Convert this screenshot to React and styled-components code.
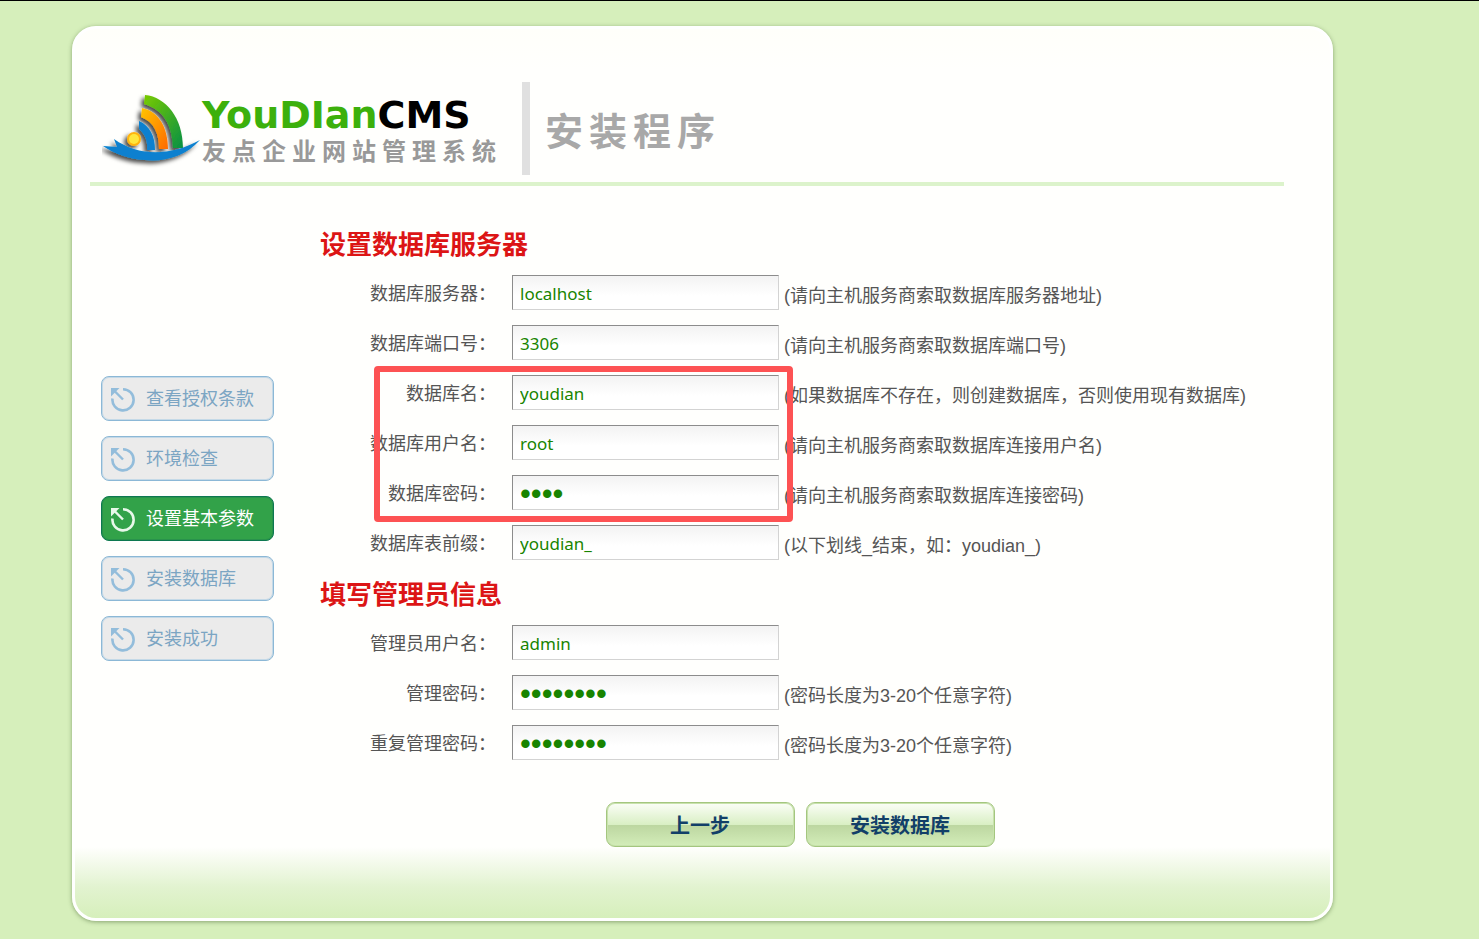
import { useId } from "react";
import styled, { createGlobalStyle, css } from "styled-components";

const GlobalStyle = createGlobalStyle`
    * {
        box-sizing: border-box;
    }
    body {
        margin: 0;
        background: #d6efbb;
        border-top: 1px solid #000;
        color: #555;
        font: 18px/38px "Liberation Sans", "Noto Sans CJK SC", sans-serif;
    }
`;
const Card = styled.div`
    margin: 25px 146px 18px 72px;
    border: 3px solid #fff;
    border-radius: 24px;
    background: linear-gradient(#fffffa, #fffffd 40px, #fffffd);
    box-shadow: 0 1px 4px rgba(60, 90, 40, 0.5);
    overflow: hidden;
`;
const Header = styled.header`
    display: flex;
    align-items: center;
    margin: 0 46px 0 15px;
    padding: 53px 0 7px 12px;
    border-bottom: 4px solid #dcf3cb;
`;
const Brand = styled.div`
    width: 298px;
    height: 74px;
    white-space: nowrap;
`;
const BrandName = styled.div`
    color: #3cb00c;
    font: bold 38px/46px "DejaVu Sans", sans-serif;
    span {
        color: #000;
    }
`;
const BrandSub = styled.div`
    color: #999;
    font: bold 24px/28px "Liberation Sans", "Noto Sans CJK SC", sans-serif;
    letter-spacing: 6px;
`;
const Product = styled.h1`
    margin: 0 0 0 22px;
    padding-left: 15px;
    border-left: 8px solid #e0e0e0;
    color: #a8a8a8;
    font: bold 38px/93px "Noto Sans CJK SC", sans-serif;
    letter-spacing: 6px;
`;
const Main = styled.main`
    display: flex;
    padding: 39px 50px 0 26px;
`;
const Steps = styled.ol`
    display: flex;
    flex: none;
    flex-direction: column;
    gap: 15px;
    width: 219px;
    margin: 0;
    padding: 151px 46px 0 0;
    list-style: none;
`;
const Step = styled.li`
    display: flex;
    align-items: center;
    gap: 9px;
    height: 45px;
    padding: 0 0 0 8px;
    border: 1px solid #8cb8d6;
    border-radius: 8px;
    background: #ebebeb;
    color: #7ba5c3;
    box-shadow: inset 0 0 0 1px #c4d9e7;
    svg {
        color: #93bddb;
    }
    ${({ $active }) => $active && css`
        border-color: #0c7850;
        background: #32a249;
        color: #fff;
        box-shadow: inset 0 0 0 1px #29924c;
        svg {
            color: #e8f8ea;
        }
    `}
`;
const Form = styled.form`
    flex: 1;
    min-width: 0;
`;
const Rows = styled.div`
    display: flex;
    flex-direction: column;
    gap: 15px;
`;
const Marked = styled(Rows)`
    position: relative;
`;
const Marker = styled.div`
    position: absolute;
    top: -9px;
    left: 54px;
    width: 419px;
    height: 156px;
    border: 6px solid #fd5253;
    border-radius: 4px;
    pointer-events: none;
`;
const Title = styled.h2`
    height: 35px;
    margin: 0;
    color: #dc1515;
    font-size: 26px;
    line-height: 40px;
`;
const Row = styled.div`
    display: flex;
    height: 35px;
    white-space: nowrap;
`;
const Label = styled.label`
    flex: none;
    width: 176px;
    margin-right: 16px;
    text-align: right;
`;
const Input = styled.input`
    flex: none;
    width: 267px;
    height: 35px;
    padding: 2px 7px 0;
    border: 1px solid #d3d3d3;
    border-top-color: #8c8c8c;
    border-left-color: #8c8c8c;
    border-radius: 0;
    outline: 0;
    background: linear-gradient(#f3f3f3, #fff 20px);
    color: #188400;
    font: 17px "Noto Sans", sans-serif;
    &[type="password"] {
        font: 31px/31px "Liberation Sans", sans-serif;
    }
`;
const Hint = styled.span`
    margin-left: 5px;
    line-height: 42px;
`;
const Actions = styled.div`
    display: flex;
    justify-content: center;
    gap: 11px;
    padding-top: 42px;
`;
const Button = styled.button`
    width: 189px;
    height: 45px;
    padding: 0;
    border: 1px solid #a4c67f;
    border-radius: 9px;
    background: linear-gradient(#fbfef7, #d9efc4 50%, #bcd6a0 51%, #d3edb9);
    box-shadow: inset 0 0 0 1px #c8e2ac;
    color: #123f68;
    font: bold 20px "Noto Sans CJK SC", sans-serif;
`;
const Footer = styled.footer`
    height: 71px;
    background: linear-gradient(#fffffd, #e2f3d0 40px, #d6efbb);
`;

const Logo = () => (
    <svg width="100" height="84" viewBox="0 0 100 84" aria-hidden="true">
        <defs>
            <linearGradient id="leaf" x1="0" y1="0" x2="1" y2="1">
                <stop offset="0" stopColor="#79cb00" />
                <stop offset="1" stopColor="#079044" />
            </linearGradient>
            <linearGradient id="sun" x1="0" y1="0" x2="1" y2="1">
                <stop offset="0" stopColor="#ffc400" />
                <stop offset="1" stopColor="#ff6a00" />
            </linearGradient>
            <filter id="soft" x="-20%" y="-20%" width="140%" height="140%">
                <feDropShadow dx="-3" dy="3" stdDeviation="2" floodColor="#000" floodOpacity="0.7" />
            </filter>
        </defs>
        <g filter="url(#soft)">
            <path d="M43 8c21 2 38 23 38 53H71C70 38 62 23 42 17z" fill="url(#leaf)" />
            <path d="M40 21c18 4 26 21 26 41H57C57 46 52 35 39 30z" fill="url(#sun)" />
            <path d="M37 34c11 5 16 15 16 29H45C46 54 43 47 37 42z" fill="#0880cf" />
            <circle cx="32" cy="52" r="7" fill="#ffb30f" />
            <path d="M1 59l14 1-3-8c25 18 57 17 86 1-15 17-37 22-55 20-17-1-32-7-42-14z" fill="#0880cf" />
        </g>
        <circle cx="32" cy="52" r="5" fill="#ffe63c" />
    </svg>
);

const StepIcon = () => (
    <svg width="27" height="27" viewBox="0 0 27 27" fill="none" aria-hidden="true">
        <path d="M13 4.2A10.6 10.6 0 1 1 2.5 13.5" stroke="currentColor" strokeWidth="2.6" />
        <path d="M4 5.5l9 9" stroke="currentColor" strokeWidth="2.4" />
        <path d="M1 3h8.5L1 11.5z" fill="currentColor" />
    </svg>
);

const Field = ({ label, value, hint, type = "text" }) => {
    const id = useId();
    return (
        <Row>
            <Label htmlFor={id}>{label}：</Label>
            <Input id={id} type={type} defaultValue={value} />
            {hint && <Hint>{hint}</Hint>}
        </Row>
    );
};

const steps = ["查看授权条款", "环境检查", "设置基本参数", "安装数据库", "安装成功"];

const App = () => {
    return (
        <>
            <GlobalStyle />
            <Card>
                <Header>
                    <Logo />
                    <Brand>
                        <BrandName>YouDIan<span>CMS</span></BrandName>
                        <BrandSub>友点企业网站管理系统</BrandSub>
                    </Brand>
                    <Product>安装程序</Product>
                </Header>
                <Main>
                    <Steps>
                        {steps.map((step, index) => (
                            <Step key={step} $active={index === 2}>
                                <StepIcon />
                                <span>{step}</span>
                            </Step>
                        ))}
                    </Steps>
                    <Form onSubmit={(e) => e.preventDefault()}>
                        <Rows>
                            <Title>设置数据库服务器</Title>
                            <Field label="数据库服务器" value="localhost" hint="(请向主机服务商索取数据库服务器地址)" />
                            <Field label="数据库端口号" value="3306" hint="(请向主机服务商索取数据库端口号)" />
                            <Marked>
                                <Field label="数据库名" value="youdian" hint="(如果数据库不存在，则创建数据库，否则使用现有数据库)" />
                                <Field label="数据库用户名" value="root" hint="(请向主机服务商索取数据库连接用户名)" />
                                <Field label="数据库密码" value="root" type="password" hint="(请向主机服务商索取数据库连接密码)" />
                                <Marker />
                            </Marked>
                            <Field label="数据库表前缀" value="youdian_" hint="(以下划线_结束，如：youdian_)" />
                            <Title>填写管理员信息</Title>
                            <Field label="管理员用户名" value="admin" />
                            <Field label="管理密码" value="admin123" type="password" hint="(密码长度为3-20个任意字符)" />
                            <Field label="重复管理密码" value="admin123" type="password" hint="(密码长度为3-20个任意字符)" />
                        </Rows>
                        <Actions>
                            <Button type="button">上一步</Button>
                            <Button type="submit">安装数据库</Button>
                        </Actions>
                    </Form>
                </Main>
                <Footer />
            </Card>
        </>
    );
};
export default App;
